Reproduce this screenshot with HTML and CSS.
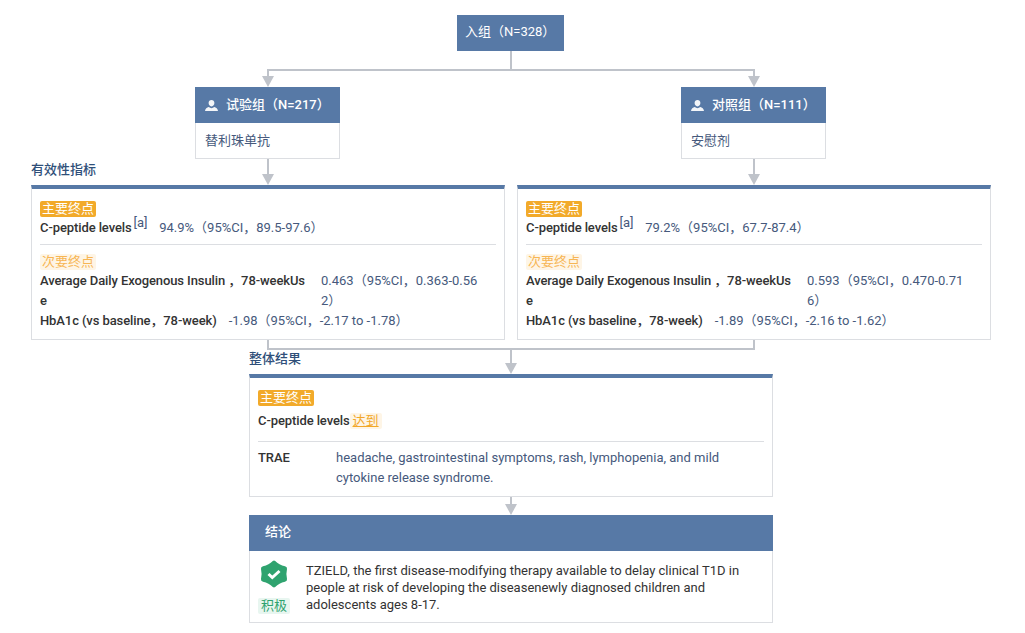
FILE: index.html
```html
<!DOCTYPE html>
<html lang="zh">
<head>
<meta charset="utf-8">
<title>Flow</title>
<link rel="stylesheet" href="styles.css">
</head>
<body>
<main class="flow">
  <svg class="links" width="1025" height="633" viewBox="0 0 1025 633" aria-hidden="true">
    <g fill="none" stroke="#bfc3ca" stroke-width="2">
      <path d="M511 51V70M268 77V70H754V77"/>
      <path d="M268 159V176M754 159V176"/>
      <path d="M268 340V349H754V340M511 349V365"/>
      <path d="M511 497V506"/>
    </g>
    <g fill="#bfc3ca">
      <path d="M262 76H274L268 87Z"/><path d="M748 76H760L754 87Z"/>
      <path d="M262 174H274L268 185Z"/><path d="M748 174H760L754 185Z"/>
      <path d="M505 363H517L511 374Z"/>
      <path d="M505 504H517L511 515Z"/>
    </g>
  </svg>

  <div class="entry">入组（N=328）</div>

  <div class="columns arms">
    <section class="arm">
      <h2 class="arm-head"><svg class="person" viewBox="0 0 13 11"><path d="M6.500 0C8.200 0 9.400 1.300 9.400 3.100S8.200 6.400 6.500 6.400 3.600 4.900 3.600 3.100 4.800 0 6.500 0zM0 11c.2-2.300 1.900-3.300 3.800-3.900.8.700 1.700 1.100 2.700 1.100s1.900-.4 2.700-1.100c1.900.6 3.600 1.600 3.800 3.900z"/></svg>试验组（N=217）</h2>
      <div class="arm-body">替利珠单抗</div>
    </section>
    <section class="arm">
      <h2 class="arm-head"><svg class="person" viewBox="0 0 13 11"><path d="M6.500 0C8.200 0 9.400 1.300 9.400 3.100S8.200 6.400 6.500 6.400 3.600 4.900 3.600 3.100 4.800 0 6.500 0zM0 11c.2-2.300 1.900-3.300 3.800-3.900.8.700 1.700 1.100 2.700 1.100s1.900-.4 2.700-1.100c1.900.6 3.600 1.600 3.800 3.900z"/></svg>对照组（N=111）</h2>
      <div class="arm-body">安慰剂</div>
    </section>
  </div>

  <h3 class="section-title title-efficacy">有效性指标</h3>
  <div class="columns results">
    <section class="card">
      <span class="tag tag-primary">主要终点</span>
      <div class="row"><span class="label">C-peptide levels<sup class="ref">[a]</sup></span><span class="value">94.9%（95%CI，89.5-97.6）</span></div>
      <hr class="rule">
      <span class="tag tag-secondary">次要终点</span>
      <div class="row row-long"><span class="label">Average Daily Exogenous Insulin ，78-weekUse</span><span class="value">0.463（95%CI，0.363-0.562）</span></div>
      <div class="row"><span class="label">HbA1c (vs baseline，78-week)</span><span class="value">-1.98（95%CI，-2.17 to -1.78）</span></div>
    </section>
    <section class="card">
      <span class="tag tag-primary">主要终点</span>
      <div class="row"><span class="label">C-peptide levels<sup class="ref">[a]</sup></span><span class="value">79.2%（95%CI，67.7-87.4）</span></div>
      <hr class="rule">
      <span class="tag tag-secondary">次要终点</span>
      <div class="row row-long"><span class="label">Average Daily Exogenous Insulin ，78-weekUse</span><span class="value">0.593（95%CI，0.470-0.716）</span></div>
      <div class="row"><span class="label">HbA1c (vs baseline，78-week)</span><span class="value">-1.89（95%CI，-2.16 to -1.62）</span></div>
    </section>
  </div>

  <div class="summary">
    <h3 class="section-title title-overall">整体结果</h3>
    <section class="card card-overall">
      <span class="tag tag-primary">主要终点</span>
      <div class="row row-met"><span class="label">C-peptide levels</span><a class="met" href="#">达到</a></div>
      <hr class="rule rule-overall">
      <div class="row-trae"><span class="label">TRAE</span><span class="trae-text">headache, gastrointestinal symptoms, rash, lymphopenia, and mild cytokine release syndrome.</span></div>
    </section>

    <section class="conclusion">
      <h2 class="conclusion-head">结论</h2>
      <div class="conclusion-body">
        <div class="verdict">
          <svg class="seal" viewBox="0 0 28 28"><path d="M12.800 1Q14 .2 15.200 1Q19 5 25 6.200Q27.400 6.700 27 9Q25.800 14 27 19Q27.400 21.300 25 21.800Q19 23 15.200 27Q14 27.800 12.800 27Q9 23 3 21.800Q.6 21.300 1 19Q2.200 14 1 9Q.6 6.700 3 6.200Q9 5 12.800 1Z"/><path class="seal-check" d="M8.500 14l3.800 3.500 7.200-6.500"/></svg>
          <span class="tag tag-positive">积极</span>
        </div>
        <p class="conclusion-text">TZIELD, the first disease-modifying therapy available to delay clinical T1D in people at risk of developing the diseasenewly diagnosed children and adolescents ages 8-17.</p>
      </div>
    </section>
  </div>
</main>
</body>
</html>
```

FILE: styles.css
```css
* { box-sizing: border-box; }
html, body { margin: 0; background: #fff; }
body {
  font-family: Roboto, "Noto Sans CJK SC", sans-serif;
  font-size: 13px;
  line-height: 20px;
  color: #46597c;
}
.flow {
  position: relative;
  width: 1025px;
  height: 633px;
  padding: 15px 34px 0 31px;
  overflow: hidden;
}
.links { position: absolute; left: 0; top: 0; }
.entry {
  position: relative;
  width: 107px;
  height: 36px;
  margin-left: 426px;
  background: #5779a6;
  color: #fff;
  line-height: 34px;
  padding-left: 8px;
  white-space: nowrap;
}
.columns {
  position: relative;
  display: grid;
  grid-template-columns: 474px 474px;
  column-gap: 12px;
}
.arms { margin-top: 36px; }
.arm { width: 145px; margin-left: 164px; }
.arm-head {
  display: flex;
  align-items: center;
  height: 36px;
  margin: 0;
  padding-left: 10px;
  background: #5779a6;
  color: #fff;
  font-size: 13px;
  font-weight: 500;
  white-space: nowrap;
}
.person { width: 13px; height: 11px; margin-right: 8px; fill: #f3f5f8; }
.arm-body {
  height: 36px;
  padding-left: 9px;
  border: 1px solid #dcdee2;
  border-top: 0;
  background: #fff;
  line-height: 36px;
}
.section-title {
  position: relative;
  margin: 0;
  font-size: 13px;
  font-weight: 500;
  line-height: 20px;
  color: #2f4f79;
}
.title-efficacy { margin-top: 1px; height: 25px; }
.title-overall { height: 25px; margin-top: 9px; }
.card {
  position: relative;
  display: flex;
  flex-direction: column;
  align-items: flex-start;
  height: 155px;
  padding: 12px 8px 0;
  border: 1px solid #dcdee2;
  border-top: 4px solid #5779a6;
  background: #fff;
}
.tag {
  display: inline-block;
  height: 16px;
  padding: 0 2px;
  border-radius: 2px;
  line-height: 16px;
  white-space: nowrap;
}
.card > .tag { margin-bottom: 1px; }
.tag-primary { background: #f2aa2a; color: #fff; }
.tag-secondary { background: #fef5e6; color: #f7b554; }
.tag-positive { padding: 0 3px; background: #e8f6f0; color: #2fa36f; }
.row { display: flex; column-gap: 12px; width: 100%; }
.row-long { display: grid; grid-template-columns: 269px 162px; }
.label {
  color: #333;
  font-weight: 500;
  letter-spacing: -0.1px;
  word-break: break-all;
}
.value { word-break: break-all; }
.ref {
  font-weight: 400;
  color: #46597c;
  font-size: 13px;
  line-height: 0;
  vertical-align: 5px;
  margin-left: 2px;
}
.rule {
  width: 100%;
  height: 1px;
  margin: 6px 0 9px;
  border: 0;
  background: #dcdee2;
}
.summary { position: relative; width: 524px; margin-left: 218px; }
.card-overall { height: 123px; }
.row-met { margin-top: 4px; column-gap: 0; height: 20px; align-items: center; }
.met {
  display: inline-block;
  height: 16px;
  padding: 0 3px;
  border-radius: 2px;
  background: #fef5e6;
  color: #f2a728;
  line-height: 16px;
}
.rule-overall { margin: 10px 0 6px; }
.row-trae { display: grid; grid-template-columns: 78px 1fr; width: 100%; }
.conclusion { position: relative; margin-top: 18px; }
.conclusion-head {
  height: 36px;
  margin: 0;
  padding-left: 16px;
  background: #5779a6;
  color: #fff;
  font-size: 13px;
  font-weight: 500;
  line-height: 34px;
}
.conclusion-body {
  display: flex;
  height: 72px;
  padding: 9px 8px 0;
  border: 1px solid #dcdee2;
  border-top: 0;
  background: #fff;
}
.verdict { flex: none; display: flex; flex-direction: column; align-items: center; width: 32px; margin-right: 16px; }
.seal { flex: none; width: 28px; height: 28px; margin-bottom: 10px; fill: #2fa36f; }
.seal-check { fill: none; stroke: #fff; stroke-width: 3; }
.conclusion-text { margin: 2px 0 0; line-height: 17px; color: #333; }
```
